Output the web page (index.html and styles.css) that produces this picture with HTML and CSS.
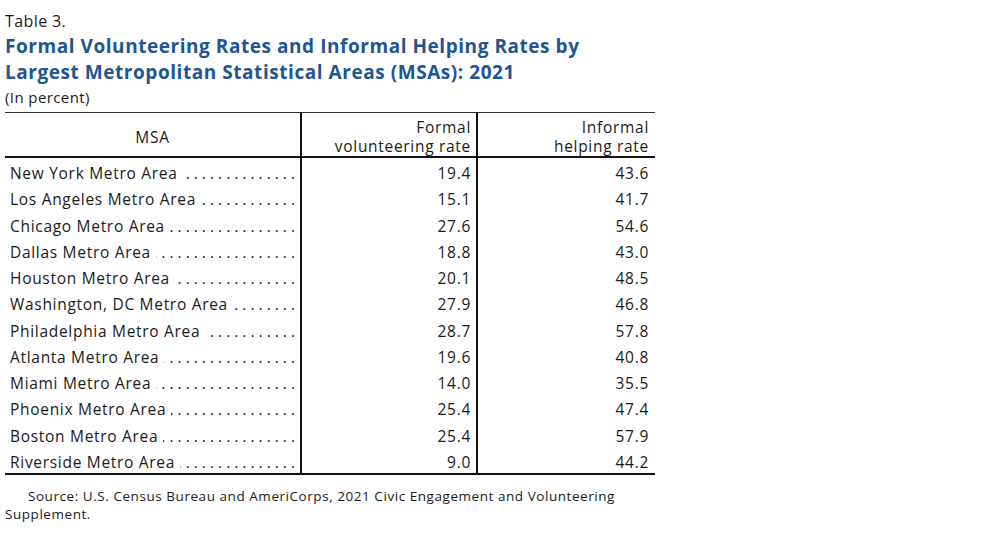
FILE: index.html
```html
<!DOCTYPE html>
<html>
<head>
<meta charset="utf-8">
<link rel="stylesheet" href="styles.css">
</head>
<body>
<div class="page">
  <div class="label">Table 3.</div>
  <h1 class="title">Formal Volunteering Rates and Informal Helping Rates by<br>Largest Metropolitan Statistical Areas (MSAs): 2021</h1>
  <div class="unit">(In percent)</div>
  <table class="data">
    <colgroup>
      <col class="w1">
      <col class="w2">
      <col class="w3">
    </colgroup>
    <thead>
      <tr>
        <th class="c-msa">MSA</th>
        <th class="c-num">Formal<br>volunteering rate</th>
        <th class="c-num c-last">Informal<br>helping rate</th>
      </tr>
    </thead>
    <tbody>
      <tr><td class="c-name"><div class="lead"><span class="nm">New York Metro Area</span><span class="dots">. . . . . . . . . . . . . . . . . . . . . . . . . . . . . . . . . . . . . . . .</span></div></td><td class="c-val">19.4</td><td class="c-val c-last">43.6</td></tr>
      <tr><td class="c-name"><div class="lead"><span class="nm">Los Angeles Metro Area</span><span class="dots">. . . . . . . . . . . . . . . . . . . . . . . . . . . . . . . . . . . . . . . .</span></div></td><td class="c-val">15.1</td><td class="c-val c-last">41.7</td></tr>
      <tr><td class="c-name"><div class="lead"><span class="nm">Chicago Metro Area</span><span class="dots">. . . . . . . . . . . . . . . . . . . . . . . . . . . . . . . . . . . . . . . .</span></div></td><td class="c-val">27.6</td><td class="c-val c-last">54.6</td></tr>
      <tr><td class="c-name"><div class="lead"><span class="nm">Dallas Metro Area</span><span class="dots">. . . . . . . . . . . . . . . . . . . . . . . . . . . . . . . . . . . . . . . .</span></div></td><td class="c-val">18.8</td><td class="c-val c-last">43.0</td></tr>
      <tr><td class="c-name"><div class="lead"><span class="nm">Houston Metro Area</span><span class="dots">. . . . . . . . . . . . . . . . . . . . . . . . . . . . . . . . . . . . . . . .</span></div></td><td class="c-val">20.1</td><td class="c-val c-last">48.5</td></tr>
      <tr><td class="c-name"><div class="lead"><span class="nm">Washington, DC Metro Area</span><span class="dots">. . . . . . . . . . . . . . . . . . . . . . . . . . . . . . . . . . . . . . . .</span></div></td><td class="c-val">27.9</td><td class="c-val c-last">46.8</td></tr>
      <tr><td class="c-name"><div class="lead"><span class="nm">Philadelphia Metro Area</span><span class="dots">. . . . . . . . . . . . . . . . . . . . . . . . . . . . . . . . . . . . . . . .</span></div></td><td class="c-val">28.7</td><td class="c-val c-last">57.8</td></tr>
      <tr><td class="c-name"><div class="lead"><span class="nm">Atlanta Metro Area</span><span class="dots">. . . . . . . . . . . . . . . . . . . . . . . . . . . . . . . . . . . . . . . .</span></div></td><td class="c-val">19.6</td><td class="c-val c-last">40.8</td></tr>
      <tr><td class="c-name"><div class="lead"><span class="nm">Miami Metro Area</span><span class="dots">. . . . . . . . . . . . . . . . . . . . . . . . . . . . . . . . . . . . . . . .</span></div></td><td class="c-val">14.0</td><td class="c-val c-last">35.5</td></tr>
      <tr><td class="c-name"><div class="lead"><span class="nm">Phoenix Metro Area</span><span class="dots">. . . . . . . . . . . . . . . . . . . . . . . . . . . . . . . . . . . . . . . .</span></div></td><td class="c-val">25.4</td><td class="c-val c-last">47.4</td></tr>
      <tr><td class="c-name"><div class="lead"><span class="nm">Boston Metro Area</span><span class="dots">. . . . . . . . . . . . . . . . . . . . . . . . . . . . . . . . . . . . . . . .</span></div></td><td class="c-val">25.4</td><td class="c-val c-last">57.9</td></tr>
      <tr><td class="c-name"><div class="lead"><span class="nm">Riverside Metro Area</span><span class="dots">. . . . . . . . . . . . . . . . . . . . . . . . . . . . . . . . . . . . . . . .</span></div></td><td class="c-val">9.0</td><td class="c-val c-last">44.2</td></tr>
    </tbody>
  </table>
  <p class="source">Source: U.S. Census Bureau and AmeriCorps, 2021 Civic Engagement and Volunteering Supplement.</p>
</div>
</body>
</html>
```

FILE: styles.css
```css
html, body {
  margin: 0;
  padding: 0;
  background: #ffffff;
}

.page {
  padding: 9px 5px 0 5px;
  font-family: "Open Sans", "Liberation Sans", sans-serif;
  color: #1a1a1a;
  font-size: 15.5px;
  letter-spacing: 0.7px;
}

.label {
  font-size: 16px;
  line-height: 24px;
  letter-spacing: 0.4px;
}

.title {
  margin: 0;
  font-size: 19px;
  line-height: 26px;
  font-weight: 700;
  color: #1f5593;
  letter-spacing: 0.55px;
}

.unit {
  font-size: 15px;
  line-height: 24px;
  letter-spacing: 0.4px;
}

.data {
  width: 650px;
  table-layout: fixed;
  border-collapse: collapse;
  margin-top: 3px;
  border-top: 1px solid #333333;
  border-bottom: 2px solid #111111;
}

.w1 { width: 296px; }
.w2 { width: 176px; }
.w3 { width: 178px; }

.data th {
  font-weight: 400;
  font-size: 15.5px;
  line-height: 19px;
  padding: 5px 5px 0 5px;
  border-bottom: 2px solid #111111;
  vertical-align: middle;
}

.c-msa {
  text-align: center;
  border-right: 2px solid #111111;
}

.c-num {
  text-align: right;
  border-right: 2px solid #111111;
}

.data .c-last {
  border-right: none;
  padding-right: 6px;
}

.data td {
  padding: 5px 5px 0 5px;
  line-height: 21.25px;
  vertical-align: top;
}

.c-name {
  border-right: 2px solid #111111;
}

.lead {
  display: flex;
  align-items: baseline;
  height: 21.25px;
}

.nm {
  white-space: nowrap;
  flex: none;
}

.dots {
  flex: 1;
  min-width: 0;
  overflow: hidden;
  white-space: nowrap;
  direction: rtl;
  text-align: right;
  margin-left: 5px;
  letter-spacing: 0;
}

.c-val {
  text-align: right;
  border-right: 2px solid #111111;
}

.source {
  width: 650px;
  margin: 12px 0 0 0;
  font-size: 13.5px;
  line-height: 18px;
  text-indent: 23px;
  letter-spacing: 0.55px;
}
```
